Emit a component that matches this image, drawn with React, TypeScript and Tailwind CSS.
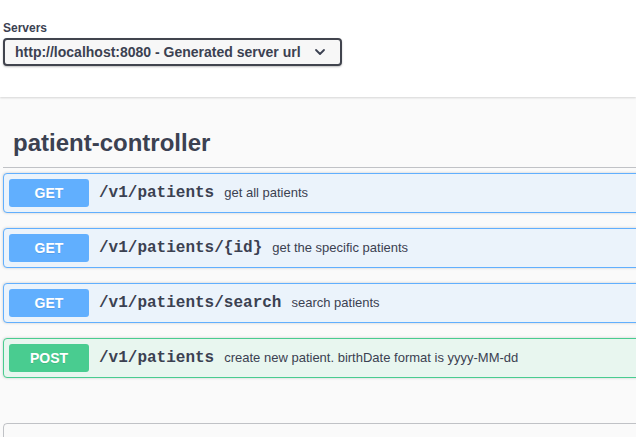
import React from "react";

type Op = { method: "GET" | "POST"; path: string; desc: string };

const ops: Op[] = [
  { method: "GET", path: "/v1/patients", desc: "get all patients" },
  { method: "GET", path: "/v1/patients/{id}", desc: "get the specific patients" },
  { method: "GET", path: "/v1/patients/search", desc: "search patients" },
  { method: "POST", path: "/v1/patients", desc: "create new patient. birthDate format is yyyy-MM-dd" },
];

function Row({ op }: { op: Op }) {
  const isGet = op.method === "GET";
  return (
    <div
      className={
        isGet
          ? "ml-[3px] mb-[15px] w-[720px] flex items-center p-[5px] border border-[#61affe] bg-[#ebf3fb] rounded-[4px] shadow-[0_0_3px_0_rgba(0,0,0,0.19)]"
          : "ml-[3px] mb-[15px] w-[720px] flex items-center p-[5px] border border-[#49cc90] bg-[#e8f6ef] rounded-[4px] shadow-[0_0_3px_0_rgba(0,0,0,0.19)]"
      }
    >
      <div
        className={
          isGet
            ? "w-[80px] h-[28px] flex items-center justify-center rounded-[3px] bg-[#61affe] text-white text-[14px] font-bold [text-shadow:0_1px_0_rgba(0,0,0,0.1)]"
            : "w-[80px] h-[28px] flex items-center justify-center rounded-[3px] bg-[#49cc90] text-white text-[14px] font-bold [text-shadow:0_1px_0_rgba(0,0,0,0.1)]"
        }
      >
        {op.method}
      </div>
      <span className="px-[10px] font-['Liberation_Mono',monospace] font-bold text-[16px] text-[#3b4151]">
        {op.path}
      </span>
      <span className="text-[13px] text-[#3b4151]">{op.desc}</span>
    </div>
  );
}

export default function App() {
  return (
    <div className="w-[636px] h-[437px] overflow-hidden bg-[#fafafa] font-['Liberation_Sans',Arial,sans-serif] text-[#3b4151]">
      <div className="bg-white h-[97px] shadow-[0_1px_2px_0_rgba(0,0,0,0.15)] pl-[3px] pt-[21px] relative">
        <div className="text-[12px] font-bold leading-[14px]">Servers</div>
        <div className="mt-[3px] w-[339px] h-[28px] border-2 border-[#41444e] rounded-[4px] bg-[#f7f7f7] shadow-[0_1px_2px_0_rgba(0,0,0,0.25)] flex items-center pl-[10px] pr-[12px]">
          <span className="text-[14px] font-bold flex-1">http://localhost:8080 - Generated server url</span>
          <svg width="12" height="8" viewBox="0 0 12 8" className="mr-[2px]">
            <path d="M2 2 L6 6 L10 2" fill="none" stroke="#3b4151" strokeWidth="1.8" strokeLinecap="round" strokeLinejoin="round" />
          </svg>
        </div>
      </div>

      <div className="mt-[22px]">
        <div className="ml-[3px] w-[720px] border-b border-[rgba(59,65,81,0.3)] py-[10px] pl-[10px] text-[24px] leading-[28px] font-bold">
          patient-controller
        </div>
        <div className="mt-[5px]">
          {ops.map((op, i) => (
            <Row key={i} op={op} />
          ))}
        </div>
        <div className="ml-[3px] mt-[45px] w-[720px] h-[60px] border border-[rgba(59,65,81,0.3)] rounded-[4px] pl-[14px] pt-[10px]">
          <div className="text-[16px] leading-[20px] font-bold">Schemas</div>
        </div>
      </div>
    </div>
  );
}
